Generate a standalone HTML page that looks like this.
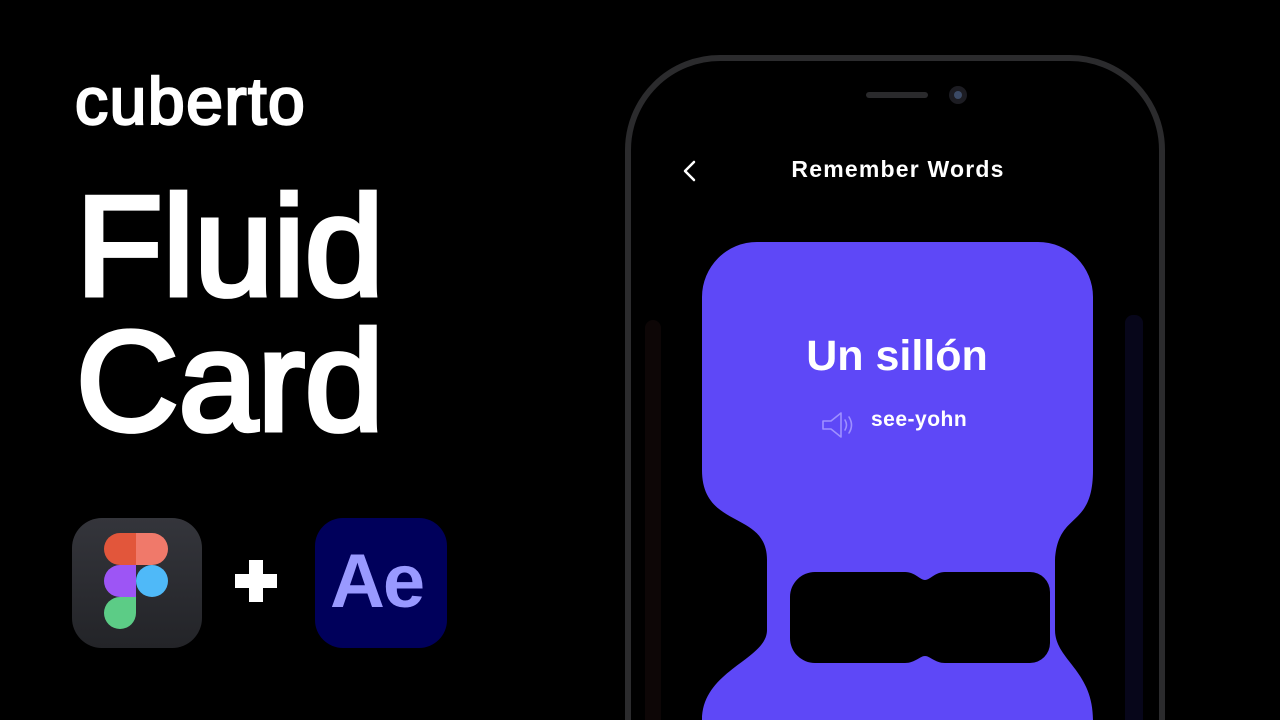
<!DOCTYPE html>
<html><head><style>
body{margin:0;width:1280px;height:720px;background:#000;overflow:hidden;position:relative;font-family:"Liberation Sans",sans-serif;color:#fff}
.t{position:absolute;font-weight:700;white-space:nowrap}
.r{position:absolute;font-weight:400;white-space:nowrap;-webkit-text-stroke:#fff}
</style></head><body>
<div class="r" style="left:75px;top:68px;font-size:66px;letter-spacing:1.6px;line-height:66px;-webkit-text-stroke-width:2.5px">cuberto</div>
<div class="r" style="left:76px;top:176px;font-size:142px;letter-spacing:0px;line-height:142px;-webkit-text-stroke-width:5px">Fluid</div>
<div class="r" style="left:76px;top:311px;font-size:142px;letter-spacing:0px;line-height:142px;-webkit-text-stroke-width:5px">Card</div>

<div style="position:absolute;left:72px;top:518px;width:130px;height:130px;border-radius:30px;background:linear-gradient(#34353b,#232428)"></div>
<svg style="position:absolute;left:72px;top:518px" width="130" height="130">
<g transform="translate(11,-9)">
<path d="M37 24 H53 V56 H37 a16 16 0 0 1 0-32Z" fill="#e2563b"/>
<path d="M53 24 H69 a16 16 0 0 1 0 32 H53Z" fill="#f0796a"/>
<path d="M37 56 H53 V88 H37 a16 16 0 0 1 0-32Z" fill="#9d55f5"/>
<circle cx="69" cy="72" r="16" fill="#4fb9f8"/>
<path d="M37 88 H53 V104 a16 16 0 1 1 -16 -16Z" fill="#5ccc86"/>
</g>
</svg>
<div style="position:absolute;left:249px;top:560px;width:14px;height:42px;background:#fff"></div>
<div style="position:absolute;left:235px;top:574px;width:42px;height:14px;background:#fff"></div>
<div style="position:absolute;left:315px;top:518px;width:132px;height:130px;border-radius:28px;background:#00005b"></div>
<div class="t" style="left:330px;top:538px;font-size:76px;color:#9999ff;letter-spacing:-2px">Ae</div>

<svg style="position:absolute;left:0;top:0" width="1280" height="720">
<path d="M628 740 V150 a92 92 0 0 1 92 -92 H1070 a92 92 0 0 1 92 92 V740" fill="none" stroke="#2b2b2d" stroke-width="6"/>
<rect x="866" y="92" width="62" height="6" rx="3" fill="#2a2a2c"/>
<circle cx="958" cy="95" r="9" fill="#1c1c22"/><circle cx="958" cy="95" r="4" fill="#3b4a66"/>
<rect x="645" y="320" width="16" height="420" rx="8" fill="#0d0606"/>
<rect x="1125" y="315" width="18" height="420" rx="8" fill="#07061a"/>
<path d="M694 162 L685 171 L694 180" fill="none" stroke="#fff" stroke-width="2.5" stroke-linecap="round" stroke-linejoin="round"/>
<path d="M757 242 H1038 a55 55 0 0 1 55 55 V470 C1093 530 1058 510 1055 560 V630 C1055 660 1093 670 1093 720 V720 H702 V720 C702 670 767 660 767 630 V560 C767 510 702 530 702 470 V297 a55 55 0 0 1 55 -55Z" fill="#5e48f7"/>
<path d="M815 572 H905 C915 572 920 580 925 580 C930 580 935 572 945 572 H1030 a20 20 0 0 1 20 20 V643 a20 20 0 0 1 -20 20 H945 C935 663 930 656 925 656 C920 656 915 663 905 663 H815 a25 25 0 0 1 -25 -25 V597 a25 25 0 0 1 25 -25Z" fill="#000"/>
<g fill="none" stroke="#9e90ff" stroke-width="1.6" stroke-linejoin="round" stroke-linecap="round">
<path d="M823 421 H831 L841 413 V437 L831 429 H823Z"/>
<path d="M845 420 q3 5 0 10"/><path d="M849 417 q5 8 0 16"/>
</g>
</svg>
<div class="t" style="left:0;width:1796px;text-align:center;top:156px;font-size:23px;letter-spacing:1.2px">Remember Words</div>
<div class="t" style="left:0;width:1794px;text-align:center;top:332px;font-size:43px">Un sillón</div>
<div class="t" style="left:871px;top:408px;font-size:21px;letter-spacing:0.5px">see-yohn</div>
</body></html>
